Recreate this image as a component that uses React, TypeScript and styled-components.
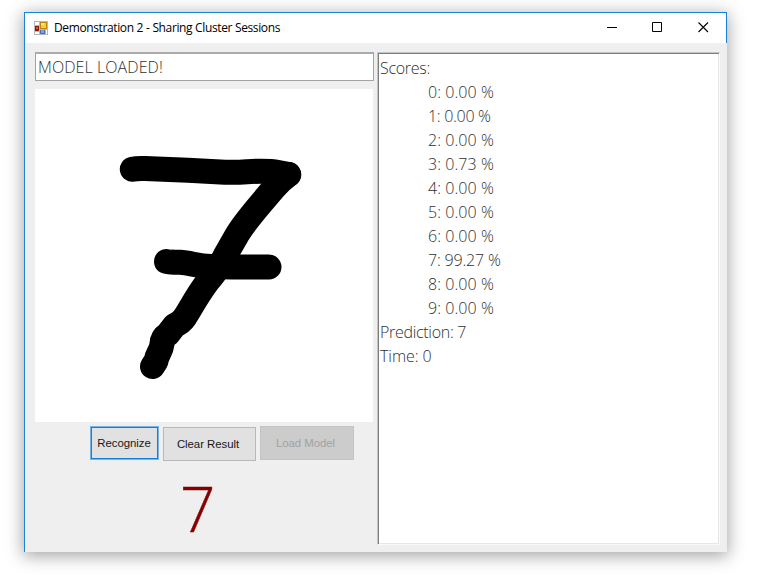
import React from "react";
import styled, { createGlobalStyle } from "styled-components";

const GlobalStyle = createGlobalStyle`
  html, body { margin: 0; padding: 0; background: #fff; overflow: hidden; }
  * { box-sizing: border-box; }
`;

const Desktop = styled.div`
  width: 757px;
  height: 580px;
  padding: 12px 0 0 24px;
  background: #fff;
  overflow: hidden;
`;

const Window = styled.main`
  display: flex;
  flex-direction: column;
  width: 703px;
  height: 540px;
  border-left: 1px solid #1883d7;
  background: #efefef;
  box-shadow: 0 3px 16px 1px rgba(0, 0, 0, 0.36);
`;

const TitleBar = styled.header`
  display: flex;
  align-items: center;
  flex: 0 0 31px;
  padding-left: 9px;
  border-top: 1px solid #1883d7;
  border-right: 1px solid #1883d7;
  background: #fff;
`;

const Title = styled.h1`
  flex: 1;
  margin: 0 0 0 6px;
  font: 400 12px/16px "Open Sans", "Noto Sans", sans-serif;
  letter-spacing: -0.38px;
  word-spacing: 0.2px;
  color: #000;
  white-space: nowrap;
`;

const WindowControl = styled.button`
  display: grid;
  place-items: center;
  width: 45.5px;
  height: 30px;
  padding: 0 0 1px;
  border: 0;
  background: transparent;
`;

const Content = styled.div`
  display: grid;
  grid-template-columns: 339px 343px;
  column-gap: 3px;
  padding: 9px 0 0 10px;
`;

const InputColumn = styled.section`
  display: flex;
  flex-direction: column;
`;

const lightText = `
  font-family: "Open Sans", "Noto Sans", sans-serif;
  font-weight: 300;
  color: #303030;
  white-space: nowrap;
`;

const Status = styled.div`
  ${lightText}
  height: 29px;
  padding: 1px 0 0 2px;
  border: 1px solid #a3a3a3;
  border-top-width: 2px;
  border-top-color: #ababab;
  background: #fff;
  font-size: 16px;
  line-height: 25px;
  letter-spacing: 0.08px;
`;

const DrawingPad = styled.div`
  width: 338px;
  height: 333px;
  margin-top: 8px;
  background: #fff;
  svg { display: block; }
`;

const Actions = styled.div`
  display: flex;
  align-items: flex-start;
  margin: 4px 0 0 55px;
`;

const Button = styled.button<{ $width: number; $kind: "primary" | "plain" | "disabled" }>`
  width: ${(p) => p.$width}px;
  height: 34px;
  margin-right: 4px;
  margin-top: ${(p) => (p.$kind === "plain" ? 1 : 0)}px;
  padding: 0 ${(p) => (p.$kind === "primary" ? 1 : 3)}px 0 0;
  border: 1px solid ${(p) => (p.$kind === "primary" ? "#72b3e8" : p.$kind === "plain" ? "#b8b8b8" : "#c3c3c3")};
  box-shadow: ${(p) => (p.$kind === "primary" ? "inset 0 0 0 1px #1280dc" : "none")};
  background: ${(p) => (p.$kind === "disabled" ? "#cccccc" : "#e1e1e1")};
  color: ${(p) => (p.$kind === "disabled" ? "#a2a2a2" : "#171717")};
  font: 400 11.4px/16px "Liberation Sans", Arial, sans-serif;
  letter-spacing: -0.04px;
  white-space: nowrap;
`;

const Result = styled.output`
  margin: 7px 0 0 145px;
  color: #850000;
  font: 300 62px/80px "Open Sans", "Noto Sans", sans-serif;
  -webkit-text-stroke: 0.5px #850000;
`;

const Scores = styled.section`
  ${lightText}
  height: 493px;
  padding: 3px 0 0 1px;
  border: 1px solid #c4c4c4;
  border-right-color: #fafafa;
  border-bottom-color: #fafafa;
  box-shadow: inset 1px 1px 0 #7d7d7d, inset -1px -1px 0 #e6e6e6;
  background: #fff;
  font-size: 16px;
  line-height: 24px;
`;

const Line = styled.div<{ $indent?: boolean; $spacing?: number }>`
  padding-left: ${(p) => (p.$indent ? 49 : 1)}px;
  letter-spacing: ${(p) => p.$spacing ?? -0.3}px;
`;

const scores = ["0.00", "0.00", "0.00", "0.73", "0.00", "0.00", "0.00", "99.27", "0.00", "0.00"];

const scoreSpacing = (digit: number) => (digit === 1 ? -0.3 : digit === 7 ? -0.18 : 0.05);

const FormIcon = () => (
  <svg width="14" height="14" viewBox="0 0 14 14" shapeRendering="crispEdges">
    <path fill="#b9b9b9" d="M0 0h14v14H0z" />
    <path fill="#fff" d="M1 1h4v3H1zM1 11h4v2H1zM12 9h1v4h-1z" />
    <path fill="#8c1a14" d="M1 5h4v5H1z" />
    <path fill="#d65246" d="M2 6h2v2H2z" />
    <path fill="#bd8500" d="M6 1h7v7H6z" />
    <path fill="#f8ca45" d="M7 2h5v5H7z" />
    <path fill="#ffe78c" d="M7 2h3v2H7z" />
    <path fill="#3d70c6" d="M6 9h5v4H6z" />
    <path fill="#70a6f4" d="M7 9h3v3H7z" />
  </svg>
);

const Drawing = () => (
  <svg width="338" height="333" viewBox="35 89 338 333" fill="none" stroke="#000" strokeWidth="25" strokeLinecap="round" strokeLinejoin="round">
    <path d="M132.300 169.200Q137 168.300 145 168.600L188 170.200L225 172.200Q237 172.500 247 171.700Q268 170.500 278 172.500L288.800 174.500" />
    <path d="M288.500 174.500Q280 181 274 188L258 207C248 219 241 228 237 235L225 256Q218 270 208 281C196 297 191 308 185 317Q181 323 175 325L168 334Q162 338 162 344C161 352 157 354 156 361L152.500 366.500" />
    <path d="M166.500 261.500Q168 262.300 180 262.300C191 263 197 266 211 266.500L232 267L269 267" />
  </svg>
);

export default function App() {
  return (
    <>
      <GlobalStyle />
      <Desktop>
        <Window>
          <TitleBar>
            <FormIcon />
            <Title>Demonstration 2 - Sharing Cluster Sessions</Title>
            <WindowControl aria-label="Minimize">
              <svg width="11" height="11"><path d="M0 5.500h10" stroke="#000" /></svg>
            </WindowControl>
            <WindowControl aria-label="Maximize">
              <svg width="11" height="11"><path d="M.5.5h9v9h-9z" fill="none" stroke="#000" /></svg>
            </WindowControl>
            <WindowControl aria-label="Close">
              <svg width="11" height="11"><path d="M.5.5l9.500 9.500M10 .5L.5 10" stroke="#000" strokeWidth="1.100" /></svg>
            </WindowControl>
          </TitleBar>
          <Content>
            <InputColumn>
              <Status>MODEL LOADED!</Status>
              <DrawingPad><Drawing /></DrawingPad>
              <Actions>
                <Button $width={69} $kind="primary">Recognize</Button>
                <Button $width={93} $kind="plain">Clear Result</Button>
                <Button $width={94} $kind="disabled" disabled>Load Model</Button>
              </Actions>
              <Result>7</Result>
            </InputColumn>
            <Scores>
              <Line>Scores:</Line>
              {scores.map((score, digit) => (
                <Line key={digit} $indent $spacing={scoreSpacing(digit)}>{digit}: {score} %</Line>
              ))}
              <Line>Prediction: 7</Line>
              <Line $spacing={-0.05}>Time: 0</Line>
            </Scores>
          </Content>
        </Window>
      </Desktop>
    </>
  );
}
